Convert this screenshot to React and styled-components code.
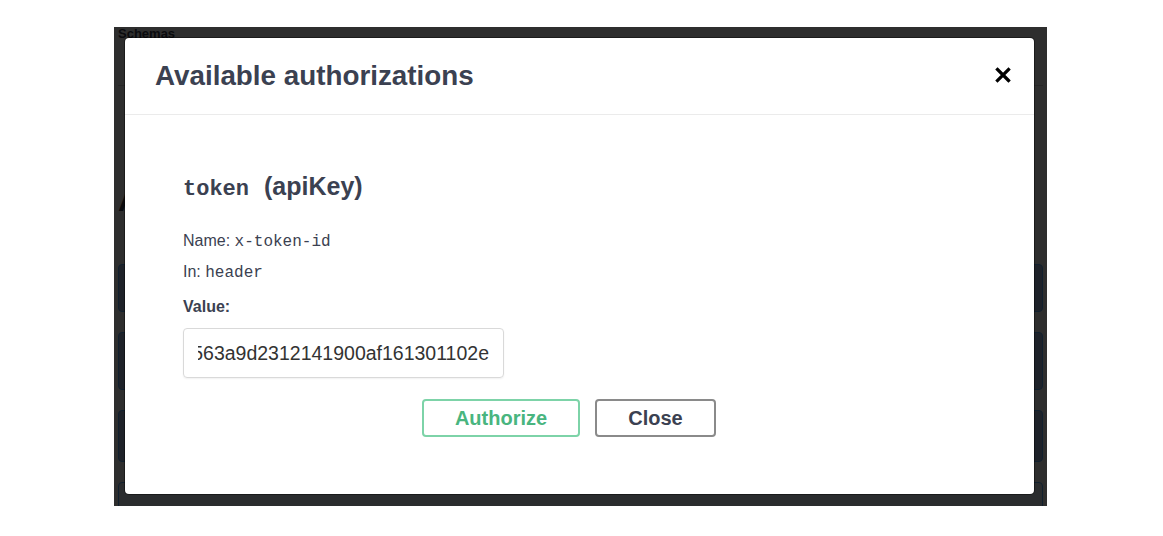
import React from 'react';
import styled, { createGlobalStyle } from 'styled-components';

const GlobalStyle = createGlobalStyle`
  html, body {
    margin: 0;
    padding: 0;
    background: #ffffff;
    font-family: 'Liberation Sans', Arial, sans-serif;
  }
`;

const Page = styled.div`
  width: 1163px;
  height: 536px;
  padding: 27px 0 0 114px;
  box-sizing: border-box;
`;

const Backdrop = styled.div`
  position: relative;
  width: 933px;
  height: 479px;
  overflow: hidden;
  background: #ffffff;
`;

const BgContent = styled.div`
  display: flex;
  flex-direction: column;
  gap: 20px;
  padding: 0 4px;
  color: #3b4151;
`;

const BgHeading = styled.div`
  font-size: 13px;
  line-height: 13px;
  font-weight: bold;
  height: 58px;
  border-bottom: 1px solid #d0d0d0;
`;

const BgLabel = styled.div`
  font-size: 30px;
  line-height: 30px;
  font-weight: bold;
  height: 138px;
  box-sizing: border-box;
  padding-top: 80px;
`;

const BgOp = styled.div`
  height: ${p => p.h}px;
  border: 1px solid #61affe;
  background: ${p => p.strong ? 'rgba(30, 90, 180, 0.4)' : 'rgba(97, 175, 254, 0.15)'};
  border-radius: 4px;
`;

const Overlay = styled.div`
  position: absolute;
  inset: 0;
  background: rgba(0, 0, 0, 0.82);
`;

const Modal = styled.div`
  position: absolute;
  left: 11px;
  top: 11px;
  width: 909px;
  height: 456px;
  background: #ffffff;
  border-radius: 4px;
  box-shadow: 0 0 0 1px rgba(0, 0, 0, 0.4);
  display: flex;
  flex-direction: column;
`;

const Header = styled.div`
  height: 77px;
  box-sizing: border-box;
  padding: 0 23px 0 30px;
  display: flex;
  align-items: center;
  justify-content: space-between;
  border-bottom: 1px solid #ebebeb;
`;

const Title = styled.h3`
  margin: 0;
  font-size: 27.8px;
  font-weight: bold;
  color: #3b4151;
`;

const CloseIcon = styled.button`
  border: none;
  background: none;
  padding: 0;
  width: 16px;
  height: 16px;
  display: flex;
  cursor: pointer;
  margin-top: -2px;
`;

const Body = styled.div`
  padding: 56px 58px 0;
  display: flex;
  flex-direction: column;
  color: #3b4151;
`;

const SchemeTitle = styled.h4`
  margin: 0;
  line-height: 30px;
  font-size: 25px;
  font-weight: 600;
  display: flex;
  align-items: baseline;
  gap: 15px;
`;

const Code = styled.code`
  font-family: 'Liberation Mono', 'DejaVu Sans Mono', monospace;
  font-size: ${p => p.size || 16}px;
  font-weight: ${p => p.bold ? 'bold' : 'normal'};
`;

const Row = styled.p`
  margin: ${p => p.top}px 0 0;
  font-size: 16px;
  line-height: 20px;
  font-weight: ${p => p.bold ? 'bold' : 'normal'};
`;

const Field = styled.div`
  margin-top: 11px;
  width: 321px;
  height: 50px;
  box-sizing: border-box;
  border: 1px solid #d9d9d9;
  border-radius: 4px;
  box-shadow: 0 1px 2px rgba(0, 0, 0, 0.06);
  padding: 0 14px;
  display: flex;
  align-items: center;
`;

const Clip = styled.div`
  flex: 1;
  overflow: hidden;
  white-space: nowrap;
  display: flex;
  justify-content: flex-end;
  font-size: 19.5px;
  color: #333333;
`;

const Value = styled.span`
  flex-shrink: 0;
`;

const Buttons = styled.div`
  margin-top: 21px;
  display: flex;
  justify-content: center;
  gap: 15px;
  padding-right: 21px;
`;

const Btn = styled.button`
  width: ${p => p.w}px;
  height: 38px;
  box-sizing: border-box;
  background: transparent;
  border: 2px solid ${p => p.color};
  color: ${p => p.text};
  border-radius: 4px;
  font-family: 'Liberation Sans', Arial, sans-serif;
  font-size: 20px;
  font-weight: bold;
  cursor: pointer;
  padding: 0;
`;

export default function App() {
  return (
    <Page>
      <GlobalStyle />
      <Backdrop>
        <BgContent>
          <BgHeading>Schemas</BgHeading>
          <BgLabel>A</BgLabel>
          <BgOp h={46} strong />
          <BgOp h={56} strong />
          <BgOp h={50} strong />
          <BgOp h={40} />
        </BgContent>
        <Overlay />
        <Modal>
          <Header>
            <Title>Available authorizations</Title>
            <CloseIcon aria-label="Close">
              <svg width="16" height="16" viewBox="0 0 16 16">
                <path d="M2.5 2.5 L13.5 13.5 M13.5 2.5 L2.5 13.5" stroke="#000" strokeWidth="3.2" strokeLinecap="square" />
              </svg>
            </CloseIcon>
          </Header>
          <Body>
            <SchemeTitle>
              <Code size={22} bold>token</Code>
              <span>(apiKey)</span>
            </SchemeTitle>
            <Row top={26}>Name: <Code>x-token-id</Code></Row>
            <Row top={10}>In: <Code>header</Code></Row>
            <Row top={14} bold>Value:</Row>
            <Field>
              <Clip>
                <Value>563a9d2312141900af161301102e</Value>
              </Clip>
            </Field>
            <Buttons>
              <Btn w={158} color="#7dd3a8" text="#49b57f">Authorize</Btn>
              <Btn w={121} color="#8a8a8a" text="#3b4151">Close</Btn>
            </Buttons>
          </Body>
        </Modal>
      </Backdrop>
    </Page>
  );
}
